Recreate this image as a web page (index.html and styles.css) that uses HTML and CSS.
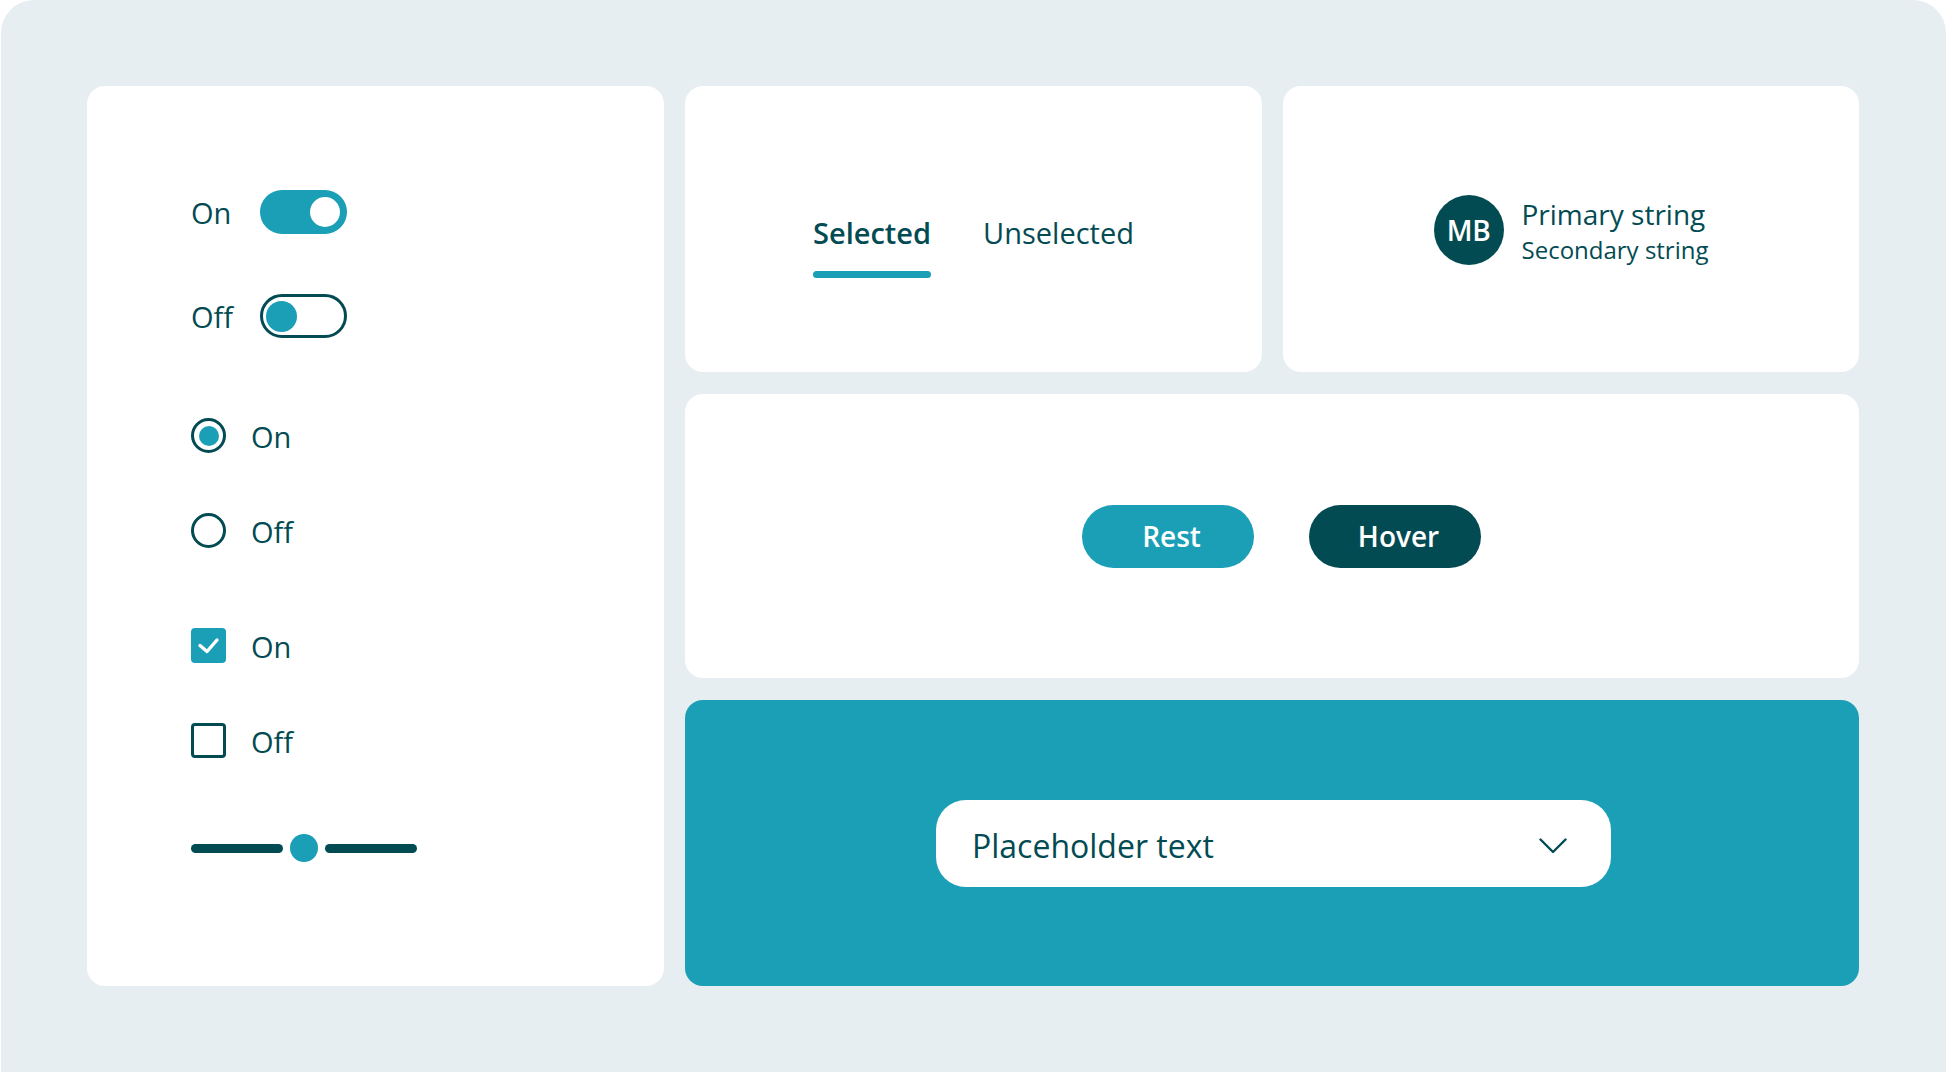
FILE: index.html
```html
<!DOCTYPE html>
<html lang="en">
<head>
<meta charset="utf-8">
<title>Controls</title>
<link rel="stylesheet" href="styles.css">
</head>
<body>
<div class="frame">
  <section class="card card-controls">
    <div class="controls">
      <div class="row">
        <span class="toggle-label">On</span>
        <span class="toggle toggle-on"><span class="toggle-thumb"></span></span>
      </div>
      <div class="row">
        <span class="toggle-label">Off</span>
        <span class="toggle toggle-off"><span class="toggle-thumb"></span></span>
      </div>
      <div class="row group-start">
        <span class="radio radio-on"><span class="radio-dot"></span></span>
        <span class="choice-label">On</span>
      </div>
      <div class="row">
        <span class="radio"></span>
        <span class="choice-label">Off</span>
      </div>
      <div class="row group-start">
        <span class="checkbox checkbox-on">
          <svg width="35" height="35" viewBox="0 0 35 35"><polyline points="9,17.5 16,23.5 26,12" fill="none" stroke="#ffffff" stroke-width="3.4" stroke-linecap="round" stroke-linejoin="round"/></svg>
        </span>
        <span class="choice-label">On</span>
      </div>
      <div class="row">
        <span class="checkbox"></span>
        <span class="choice-label">Off</span>
      </div>
      <div class="slider slider-row">
        <span class="track"></span>
        <span class="slider-thumb"></span>
        <span class="track"></span>
      </div>
    </div>
  </section>

  <section class="card card-tabs">
    <div class="tabs">
      <div class="tab tab-selected">
        <span class="tab-text">Selected</span>
        <span class="tab-bar"></span>
      </div>
      <div class="tab">
        <span class="tab-text">Unselected</span>
        <span class="tab-bar tab-bar-empty"></span>
      </div>
    </div>
  </section>

  <section class="card card-persona">
    <div class="persona">
      <div class="avatar">MB</div>
      <div class="persona-text">
        <div class="primary">Primary string</div>
        <div class="secondary">Secondary string</div>
      </div>
    </div>
  </section>

  <section class="card card-buttons">
    <button class="btn btn-rest">Rest</button>
    <button class="btn btn-hover">Hover</button>
  </section>

  <section class="card card-teal">
    <div class="dropdown">
      <span class="dropdown-text">Placeholder text</span>
      <svg class="chevron" width="28" height="16" viewBox="0 0 28 16"><polyline points="1.5,1.5 14,14 26.5,1.5" fill="none" stroke="#034b53" stroke-width="2.4" stroke-linecap="round" stroke-linejoin="round"/></svg>
    </div>
  </section>
</div>
</body>
</html>
```

FILE: styles.css
```css
* { box-sizing: border-box; }

html, body {
  margin: 0;
  padding: 0;
  background: #ffffff;
}

body {
  font-family: "Open Sans", "Noto Sans", "Liberation Sans", sans-serif;
  color: #034b53;
}

.frame {
  margin-left: 1px;
  width: 1945px;
  height: 1072px;
  background: #e6eef1;
  border-radius: 33px 33px 0 0;
  padding: 86px 0 0 86px;
  display: grid;
  grid-template-columns: 577px 577px 576px;
  grid-template-rows: 286px 284px 286px;
  column-gap: 21px;
  row-gap: 22px;
}

.card {
  background: #ffffff;
  border-radius: 18px;
}

/* Left column of controls */
.card-controls {
  grid-column: 1;
  grid-row: 1 / span 3;
  padding: 104px 0 0 104px;
}

.controls {
  display: flex;
  flex-direction: column;
  gap: 60px;
}

.row {
  display: flex;
  align-items: center;
}

.group-start {
  margin-top: 20px;
}

.toggle-label {
  width: 69px;
  font-size: 29px;
  line-height: 42px;
  padding-top: 2px;
}

.toggle {
  width: 87px;
  height: 44px;
  border-radius: 22px;
  display: flex;
  align-items: center;
}

.toggle-on {
  background: #1a9fb6;
  justify-content: flex-end;
  padding: 0 7px;
}

.toggle-on .toggle-thumb {
  width: 30px;
  height: 30px;
  border-radius: 50%;
  background: #ffffff;
}

.toggle-off {
  background: #ffffff;
  border: 3px solid #034b53;
  padding: 0 3px;
}

.toggle-off .toggle-thumb {
  width: 31px;
  height: 31px;
  border-radius: 50%;
  background: #1a9fb6;
}

.radio {
  width: 35px;
  height: 35px;
  border: 3px solid #034b53;
  border-radius: 50%;
  display: flex;
  align-items: center;
  justify-content: center;
  background: #ffffff;
}

.radio-dot {
  width: 20px;
  height: 20px;
  border-radius: 50%;
  background: #1a9fb6;
}

.checkbox {
  width: 35px;
  height: 35px;
  border: 3px solid #034b53;
  border-radius: 4px;
  display: block;
}

.checkbox-on {
  background: #1a9fb6;
  border: none;
}

.checkbox svg { display: block; }

.choice-label {
  margin-left: 25px;
  font-size: 29px;
  line-height: 33px;
  padding-top: 2px;
}

.slider-row {
  margin-top: 16px;
}

.slider {
  display: flex;
  align-items: center;
  gap: 7px;
  width: 227px;
}

.track {
  width: 92px;
  height: 9px;
  border-radius: 5px;
  background: #034b53;
}

.slider-thumb {
  width: 28px;
  height: 28px;
  border-radius: 50%;
  background: #1a9fb6;
}

/* Tabs */
.card-tabs {
  grid-column: 2;
  grid-row: 1;
  display: flex;
  align-items: center;
  justify-content: center;
  padding-top: 30px;
}

.tabs {
  display: flex;
  gap: 52px;
}

.tab {
  display: flex;
  flex-direction: column;
  align-items: stretch;
}

.tab-text {
  font-size: 29px;
  line-height: 40px;
  padding-top: 2px;
}

.tab-selected .tab-text {
  font-weight: 600;
}

.tab-bar {
  height: 7px;
  border-radius: 4px;
  background: #1a9fb6;
  margin-top: 18px;
}

.tab-bar-empty {
  background: transparent;
}

/* Persona */
.card-persona {
  grid-column: 3;
  grid-row: 1;
  display: flex;
  align-items: center;
  justify-content: center;
  padding-top: 2px;
}

.persona {
  display: flex;
  align-items: center;
  gap: 18px;
}

.avatar {
  width: 70px;
  height: 70px;
  border-radius: 50%;
  background: #034b53;
  color: #ffffff;
  font-size: 28px;
  font-weight: 600;
  display: flex;
  align-items: center;
  justify-content: center;
  letter-spacing: -0.5px;
}

.persona-text {
  display: flex;
  flex-direction: column;
  padding-top: 1px;
}

.primary {
  font-size: 28px;
  line-height: 38px;
}

.secondary {
  font-size: 24px;
  line-height: 33px;
}

/* Buttons */
.card-buttons {
  grid-column: 2 / span 2;
  grid-row: 2;
  display: flex;
  align-items: center;
  justify-content: center;
  gap: 55px;
  padding-left: 19px;
}

.btn {
  width: 172px;
  height: 63px;
  border: none;
  border-radius: 32px;
  color: #ffffff;
  font-family: inherit;
  font-size: 28px;
  font-weight: 600;
  padding: 0 0 0 7px;
}

.btn-rest { background: #1a9fb6; }
.btn-hover { background: #034b53; }

/* Dropdown */
.card-teal {
  grid-column: 2 / span 2;
  grid-row: 3;
  background: #1a9fb6;
  display: flex;
  align-items: center;
  justify-content: center;
}

.dropdown {
  width: 675px;
  height: 87px;
  border-radius: 30px;
  background: #ffffff;
  display: flex;
  align-items: center;
  justify-content: space-between;
  padding: 4px 44px 0 36px;
  margin-left: 3px;
}

.dropdown-text {
  font-size: 32px;
}

.chevron {
  display: block;
  margin-top: 2px;
}
```
